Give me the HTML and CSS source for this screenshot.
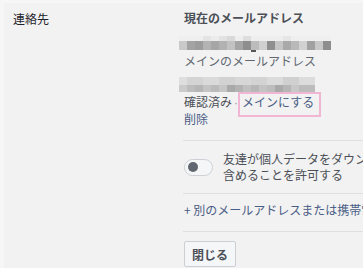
FILE: index.html
```html
<!DOCTYPE html>
<html lang="ja">
<head>
<meta charset="utf-8">
<link rel="stylesheet" href="styles.css">
</head>
<body>
<div class="page">
  <div class="label">連絡先</div>
  <div class="content">
    <div class="title">現在のメールアドレス</div>
    <div class="mosaic mosaic-a"><span class="ticks"></span></div>
    <div class="muted">メインのメールアドレス</div>
    <div class="mosaic mosaic-b"></div>
    <div class="status">確認済み<span class="dot">·</span><a class="link make-main">メインにする<span class="highlight"></span></a></div>
    <div class="remove"><a class="link">削除</a></div>
    <div class="divider first"></div>
    <div class="toggle-row">
      <span class="toggle"><span class="knob"></span></span>
      <span class="toggle-text">友達が個人データをダウンロードする際にこのメールアドレスを<br>含めることを許可する</span>
    </div>
    <div class="divider"></div>
    <div class="add"><a class="link">+ 別のメールアドレスまたは携帯電話番号を追加</a></div>
    <div class="divider"></div>
    <button class="btn">閉じる</button>
  </div>
</div>
</body>
</html>
```
FILE: styles.css
```css
html, body {
  margin: 0;
  padding: 0;
  height: 100%;
  overflow: hidden;
}
body {
  background: #f6f6f6;
  font-family: "Noto Sans CJK JP", "Noto Sans", sans-serif;
  font-size: 12px;
  color: #1d2129;
}
.page {
  display: flex;
  margin: 3px 0 0 4px;
  background: #f2f2f2;
  height: 100%;
}
.label {
  width: 171px;
  padding: 8px 0 0 9px;
  box-sizing: border-box;
  line-height: 16px;
  color: #1d2129;
  flex: none;
}
.content {
  flex: none;
  width: 400px;
  padding-top: 7px;
  line-height: 16px;
}
.title {
  font-weight: bold;
  color: #4b4f56;
  margin-left: 9px;
}
.mosaic {
  margin-left: 4px;
  position: relative;
}
.mosaic-a {
  margin-top: 10px;
  width: 152px;
  height: 14px;
  background:
    linear-gradient(90deg,
      #c9c9c9 0 8px, #a3a3a3 8px 16px, #9c9c9c 16px 24px, #b3b3b3 24px 32px,
      #a6a6a6 32px 40px, #b2b2b2 40px 48px, #c2c2c2 48px 56px, #a5a5a5 56px 64px,
      #8e8e8e 64px 72px, #bcbcbc 72px 80px, #d0d0d0 80px 88px, #8f8f8f 88px 96px,
      #c5c5c5 96px 104px, #a9a9a9 104px 112px, #b9b9b9 112px 120px, #d1d1d1 120px 128px,
      #a1a1a1 128px 136px, #c8c8c8 136px 144px, #8e8e8e 144px 152px) 0 5px / 152px 9px no-repeat,
    linear-gradient(90deg,
      #efefef 0 24px, #e4e4e4 24px 32px, #ececec 32px 40px, #e2e2e2 40px 48px,
      #d9d9d9 48px 56px, #eeeeee 56px 64px, #dedede 64px 72px, #eeeeee 72px 104px,
      #e6e6e6 104px 112px, #efefef 112px 152px) 0 0 / 152px 5px no-repeat;
}
.ticks {
  position: absolute;
  left: 72px;
  top: 14px;
  width: 5px;
  height: 2px;
  background: #555;
}
.muted {
  margin-top: 3px;
  margin-left: 9px;
  color: #606770;
}
.mosaic-b {
  margin-top: 8px;
  width: 136px;
  height: 15px;
  background:
    linear-gradient(90deg,
      #cbcbcb 0 8px, #bdbdbd 8px 16px, #b6b6b6 16px 24px, #c4c4c4 24px 32px,
      #bbbbbb 32px 40px, #c6c6c6 40px 48px, #a9a9a9 48px 56px, #b3b3b3 56px 64px,
      #c0c0c0 64px 72px, #b7b7b7 72px 80px, #c3c3c3 80px 88px, #bdbdbd 88px 96px,
      #a9a9a9 96px 104px, #b6b6b6 104px 112px, #c8c8c8 112px 120px, #bcbcbc 120px 136px) 0 8px / 136px 7px no-repeat,
    linear-gradient(90deg,
      #dedede 0 8px, #d4d4d4 8px 24px, #dadada 24px 40px, #d2d2d2 40px 56px,
      #d7d7d7 56px 72px, #d3d3d3 72px 88px, #dbdbdb 88px 104px, #d0d0d0 104px 120px,
      #dcdcdc 120px 136px) 0 0 / 136px 8px no-repeat;
}
.status {
  margin-top: 2px;
  margin-left: 9px;
  color: #4b4f56;
  white-space: nowrap;
}
.dot {
  font-family: "Liberation Sans", sans-serif;
  color: #90949c;
  margin: 0 4px 0 2px;
}
.link {
  color: #4a5d85;
  text-decoration: none;
}
.remove {
  margin-left: 9px;
}
.make-main {
  position: relative;
}
.highlight {
  position: absolute;
  left: -4px;
  top: -1px;
  width: 83px;
  height: 25px;
  border: 2px solid #f0b6d2;
  box-sizing: border-box;
}
.divider {
  height: 1px;
  background: #dddfe2;
  margin-left: 8px;
}
.divider.first {
  margin-top: 13px;
}
.toggle-row {
  display: flex;
  align-items: center;
  gap: 10px;
  margin-left: 9px;
  padding: 10px 0 10px 0;
  white-space: nowrap;
  color: #4b4f56;
}
.toggle {
  width: 29px;
  height: 17px;
  border: 1px solid #ccd0d5;
  border-radius: 9px;
  background: #f5f6f7;
  box-sizing: border-box;
  display: flex;
  align-items: center;
  padding-left: 3px;
  flex: none;
}
.knob {
  width: 10px;
  height: 10px;
  border-radius: 50%;
  background: #606770;
}
.add {
  margin-left: 9px;
  padding: 8px 0 13px 0;
  white-space: nowrap;
}
.btn {
  margin: 9px 0 0 9px;
  height: 26px;
  padding: 0 7px;
  border: 1px solid #ccd0d5;
  border-radius: 2px;
  background: #f5f6f7;
  color: #4b4f56;
  font-family: inherit;
  font-size: 12px;
  font-weight: bold;
}
```
